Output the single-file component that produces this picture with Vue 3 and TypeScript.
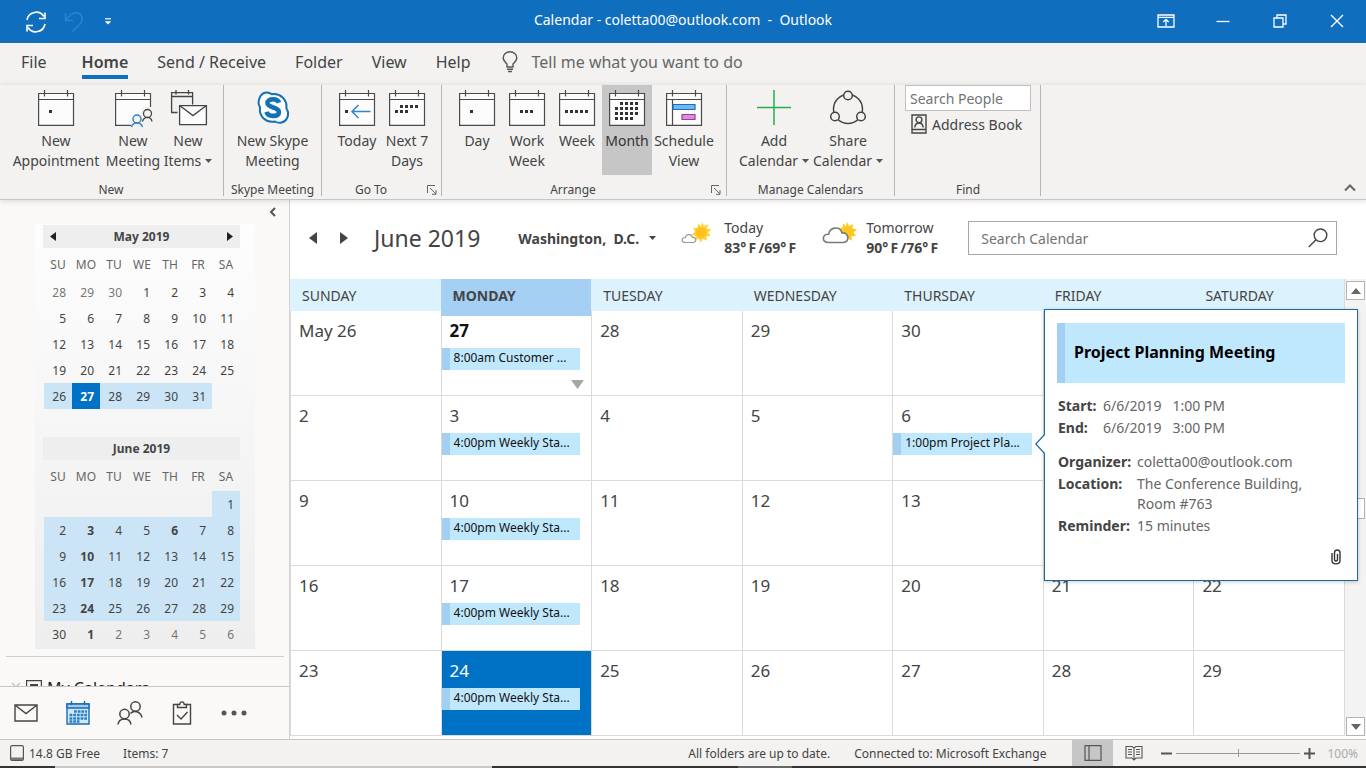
<script setup lang="ts">
import { ref } from 'vue'

interface RibbonButton {
  id: string
  lines: string[]
  icon: 'cal' | 'items' | 'skype' | 'plus' | 'share'
  dots?: number[][]
  menu?: boolean
}
interface RibbonGroup {
  id: string
  label: string
  launcher?: boolean
  buttons: RibbonButton[]
}

const monthDots: number[][] = [
  [13, 14], [18, 14], [23, 14], [28, 14],
  [8, 19], [13, 19], [18, 19], [23, 19], [28, 19],
  [8, 24], [13, 24], [18, 24], [23, 24], [28, 24],
  [8, 29], [13, 29], [18, 29], [23, 29],
]

const groups: RibbonGroup[] = [
  {
    id: 'new', label: 'New',
    buttons: [
      { id: 'appointment', lines: ['New', 'Appointment'], icon: 'cal', dots: [[13, 22]] },
      { id: 'meeting', lines: ['New', 'Meeting'], icon: 'cal', dots: [] },
      { id: 'items', lines: ['New', 'Items'], icon: 'items', menu: true },
    ],
  },
  {
    id: 'skype', label: 'Skype Meeting',
    buttons: [{ id: 'skype', lines: ['New Skype', 'Meeting'], icon: 'skype' }],
  },
  {
    id: 'goto', label: 'Go To', launcher: true,
    buttons: [
      { id: 'today', lines: ['Today'], icon: 'cal', dots: [[8, 22]] },
      { id: 'next7', lines: ['Next 7', 'Days'], icon: 'cal', dots: [[13, 17], [18, 17], [23, 17], [28, 17], [8, 22], [13, 22], [18, 22]] },
    ],
  },
  {
    id: 'arrange', label: 'Arrange', launcher: true,
    buttons: [
      { id: 'day', lines: ['Day'], icon: 'cal', dots: [[13, 22]] },
      { id: 'work', lines: ['Work', 'Week'], icon: 'cal', dots: [[13, 22], [18, 22], [23, 22]] },
      { id: 'week', lines: ['Week'], icon: 'cal', dots: [[8, 22], [13, 22], [18, 22], [23, 22], [28, 22]] },
      { id: 'month', lines: ['Month'], icon: 'cal', dots: monthDots },
      { id: 'schedule', lines: ['Schedule', 'View'], icon: 'cal', dots: [] },
    ],
  },
  {
    id: 'manage', label: 'Manage Calendars',
    buttons: [
      { id: 'add', lines: ['Add', 'Calendar'], icon: 'plus', menu: true },
      { id: 'share', lines: ['Share', 'Calendar'], icon: 'share', menu: true },
    ],
  },
]

const tabs = ['File', 'Home', 'Send / Receive', 'Folder', 'View', 'Help']
const dow = ['SU', 'MO', 'TU', 'WE', 'TH', 'FR', 'SA']

interface MiniDay { n: string; cls: string }
const d = (list: string, cls = ''): MiniDay[] => list.split(' ').map((n) => ({ n: n === '-' ? '' : n, cls: n === '-' ? '' : cls }))
const juneWeek = (list: string, bold: string[]): MiniDay[] =>
  list.split(' ').map((n) => ({ n, cls: bold.includes(n) ? 'in busy' : 'in' }))

const minis = [
  {
    title: 'May 2019', nav: true,
    weeks: [
      [...d('28 29 30', 'off'), ...d('1 2 3 4')],
      d('5 6 7 8 9 10 11'),
      d('12 13 14 15 16 17 18'),
      d('19 20 21 22 23 24 25'),
      [...d('26', 'in'), ...d('27', 'today'), ...d('28 29 30 31', 'in'), ...d('-')],
    ],
  },
  {
    title: 'June 2019', nav: false,
    weeks: [
      [...d('- - - - - -'), ...d('1', 'in')],
      juneWeek('2 3 4 5 6 7 8', ['3', '6']),
      juneWeek('9 10 11 12 13 14 15', ['10']),
      juneWeek('16 17 18 19 20 21 22', ['17']),
      juneWeek('23 24 25 26 27 28 29', ['24']),
      [...d('30'), ...d('1', 'busy'), ...d('2 3 4 5 6', 'off')],
    ],
  },
]

const weekdays = ['SUNDAY', 'MONDAY', 'TUESDAY', 'WEDNESDAY', 'THURSDAY', 'FRIDAY', 'SATURDAY']
interface DayCell { label: string; event?: string; cls?: string; more?: boolean }
const weekly = '4:00pm Weekly Sta...'
const blank: DayCell = { label: '' }
const weeks: DayCell[][] = [
  [{ label: 'May 26' }, { label: '27', event: '8:00am Customer ...', cls: 'now', more: true }, { label: '28' }, { label: '29' }, { label: '30' }, blank, blank],
  [{ label: '2' }, { label: '3', event: weekly }, { label: '4' }, { label: '5' }, { label: '6', event: '1:00pm Project Pla...' }, blank, blank],
  [{ label: '9' }, { label: '10', event: weekly }, { label: '11' }, { label: '12' }, { label: '13' }, blank, blank],
  [{ label: '16' }, { label: '17', event: weekly }, { label: '18' }, { label: '19' }, { label: '20' }, { label: '21' }, { label: '22' }],
  [{ label: '23' }, { label: '24', event: weekly, cls: 'picked' }, { label: '25' }, { label: '26' }, { label: '27' }, { label: '28' }, { label: '29' }],
]

const people = ref('')
const query = ref('')
const zoomLevel = ref(50)
</script>

<template>
  <div class="window">
    <header class="titlebar">
      <div class="quick">
        <button type="button" aria-label="Send and receive all">
          <svg width="24" height="24" viewBox="0 0 24 24" fill="none" stroke="#fff" stroke-width="1.6">
            <path d="M3 10a9.3 9.3 0 0 1 17-3.500M21 14a9.300 9.300 0 0 1-17 3.500" />
            <path d="M21 2.500v6h-6M3 21.500v-6h6" />
          </svg>
        </button>
        <button type="button" aria-label="Undo" disabled>
          <svg width="20" height="22" viewBox="0 0 20 22" fill="none" stroke="#2b84d2" stroke-width="1.600">
            <path d="M1.500 2v7.500H9M2 9l4.500-5C10 .5 15 1 17.200 4.500c1.800 3 1 6-1 8.300L8.500 20.500" />
          </svg>
        </button>
        <button type="button" aria-label="Customize Quick Access Toolbar">
          <svg width="8" height="8" viewBox="0 0 8 8"><path d="M1 .8h6" stroke="#fff" stroke-width="1.200" /><path d="M.8 3.200h6.400L4 6.600z" fill="#fff" /></svg>
        </button>
      </div>
      <h1>Calendar - coletta00@outlook.com &nbsp;-&nbsp; Outlook</h1>
      <div class="controls">
        <button type="button" aria-label="Ribbon display options">
          <svg width="18" height="14" viewBox="0 0 18 14" fill="none" stroke="#fff" stroke-width="1.300"><path d="M1 1h16v12H1zM1 3.300h16M9 12V5.500M6.300 8 9 5.300 11.700 8" /></svg>
        </button>
        <button type="button" aria-label="Minimize">
          <svg width="14" height="14" viewBox="0 0 14 14" stroke="#fff" stroke-width="1.300"><path d="M.5 7.500h13" /></svg>
        </button>
        <button type="button" aria-label="Restore">
          <svg width="14" height="14" viewBox="0 0 14 14" fill="none" stroke="#fff" stroke-width="1.300"><path d="M1 4h9v9H1zM4 4V1h9v9h-3" /></svg>
        </button>
        <button type="button" aria-label="Close">
          <svg width="14" height="14" viewBox="0 0 14 14" stroke="#fff" stroke-width="1.400"><path d="m1 1 12 12M13 1 1 13" /></svg>
        </button>
      </div>
    </header>

    <nav class="tabs" aria-label="Ribbon tabs">
      <button v-for="t in tabs" :key="t" type="button" :class="{ active: t === 'Home', file: t === 'File' }">{{ t }}</button>
      <button type="button" class="tell">
        <svg width="16" height="22" viewBox="0 0 16 22" fill="none" stroke="#555" stroke-width="1.400">
          <path d="M5 16v-3C3 11 1.200 9.500 1.200 7a6.800 6.300 0 0 1 13.600 0c0 2.500-1.800 4-3.800 6v3zM5 18.200h6M6 20.500h4" />
        </svg>
        <span>Tell me what you want to do</span>
      </button>
    </nav>

    <section class="ribbon" aria-label="Home">
      <div v-for="g in groups" :key="g.id" class="group" :class="g.id">
        <div class="buttons">
          <button v-for="b in g.buttons" :key="b.id" type="button" :class="{ on: b.id === 'month' }">
            <svg v-if="b.icon === 'cal'" width="38" height="36" viewBox="-1 0 38 36" fill="none" stroke="#4a4a4a" stroke-width="1.200">
              <path d="M.6 3.500h34.900v31.900H.6z" fill="#fcfcfc" />
              <path d="M.6 9.500h34.900M6.500 0v6.500M29.500 0v6.500" />
              <path v-for="(p, i) in b.dots" :key="i" :d="`M${p[0] - 2} ${p[1] - 0.5}h3`" stroke="#333" stroke-width="3" />
              <template v-if="b.id === 'meeting'">
                <path d="M16 37V30l10-6 2-7h9v20z" fill="#f3f2f1" stroke="none" />
                <g stroke="#444" stroke-width="1.300"><circle cx="32.500" cy="23.500" r="4" /><path d="M27.500 31.500c1.500-5.500 8.500-5.500 9.500 0" /></g>
                <g stroke="#2b7cc2" stroke-width="1.400"><circle cx="22" cy="29" r="4" /><path d="M16.500 37c1.500-5.500 9.500-5.500 11 0" /></g>
              </template>
              <path v-if="b.id === 'today'" d="M31.500 21.500H13M19.500 15l-6.500 6.500 6.500 6.500" stroke="#2f86cc" stroke-width="1.500" />
              <template v-if="b.id === 'schedule'">
                <path d="M6.500 10v25" />
                <path d="M7 14.500h22v5H7z" fill="#6fb9ef" stroke="#1a6fb8" />
                <path d="M16 24.500h13v5H16z" fill="#e08ade" stroke="#9a3f98" />
              </template>
            </svg>
            <svg v-else-if="b.icon === 'items'" width="38" height="36" viewBox="0 0 38 36" fill="none" stroke="#444" stroke-width="1.300">
              <path d="M8.500 22.500H2.600V2.600h21v12" /><path d="M2.600 6.500h21M7 0v4.500M19.500 0v4.500" />
              <path d="M10.600 15.600h26.800v19H10.600z" fill="#fcfcfc" /><path d="m10.600 15.600 13.400 10 13.400-10" />
            </svg>
            <svg v-else-if="b.icon === 'skype'" width="36" height="36" viewBox="0 0 36 36">
              <path d="M10 2.800c2.600-.6 5 .2 6.800 1.500C25 3 32.600 9.500 31.400 18.500c2 3 2.300 6.500.6 9.700-2.500 4.700-8 5.800-12 3.300C11 33 3.800 26.500 5 17.300c-1.600-2.800-1.900-6-.6-9C5.400 5.500 7.400 3.500 10 2.800z" fill="#fdfdfd" stroke="#1272b4" stroke-width="2" />
              <path d="M24 12.700c-.9-2.700-3.400-3.400-6-3.400-3.400 0-5.500 1.500-5.500 3.800 0 5.400 11.400 3.300 11.400 8.800 0 2.700-2.500 4-6 4-3 0-5.600-1.100-6.400-4" fill="none" stroke="#1272b4" stroke-width="4.600" />
            </svg>
            <svg v-else-if="b.icon === 'plus'" width="36" height="36" viewBox="0 0 36 36" stroke="#27ae4b" stroke-width="1.500"><path d="M18 0v35M1 17.500h34" /></svg>
            <svg v-else width="38" height="36" viewBox="0 0 38 36" fill="#f3f2f1" stroke="#444" stroke-width="1.500">
              <circle cx="19" cy="19" r="14.500" fill="none" /><circle cx="19" cy="5.500" r="4.300" /><circle cx="6" cy="26.500" r="4.300" /><circle cx="32" cy="26.500" r="4.300" />
            </svg>
            <span v-for="(l, i) in b.lines" :key="l" class="line">{{ l }}<svg v-if="b.menu && i === 1" class="caret" width="7" height="4" viewBox="0 0 7 4"><path d="M0 0h7L3.500 4z" fill="#555" /></svg></span>
          </button>
        </div>
        <div class="glabel" :class="{ withlauncher: g.launcher }">
          {{ g.label }}
          <button v-if="g.launcher" type="button" class="launcher" :aria-label="g.label + ' options'">
            <svg width="10" height="10" viewBox="0 0 10 10" fill="none" stroke="#666"><path d="M.5 8V.5H8M3 3l6 6M9 5v4.300H5" /></svg>
          </button>
        </div>
      </div>
      <div class="group find">
        <div class="findbody">
          <input v-model="people" type="text" placeholder="Search People" aria-label="Search People">
          <button type="button" class="book">
            <svg width="16" height="20" viewBox="0 0 16 20" fill="none" stroke="#444" stroke-width="1.400"><path d="M1 1h14v18H1zM1 15.500h14" /><circle cx="8" cy="5.800" r="2.900" /><path d="M3.800 13.500c.5-6 7.900-6 8.400 0" /></svg>
            Address Book
          </button>
        </div>
        <div class="glabel">Find</div>
      </div>
      <button type="button" class="collapse" aria-label="Collapse the ribbon">
        <svg width="12" height="8" viewBox="0 0 12 8" fill="none" stroke="#666" stroke-width="2"><path d="m1 6.500 5-5 5 5" /></svg>
      </button>
    </section>

    <div class="body">
      <aside class="side">
        <div class="folders">
          <button type="button" class="shrink" aria-label="Minimize the folder pane">
            <svg width="7" height="10" viewBox="0 0 7 10" fill="none" stroke="#555" stroke-width="2"><path d="M6 1 2 5l4 4" /></svg>
          </button>
          <div class="minis">
            <div v-for="m in minis" :key="m.title" class="mini">
              <div class="minihead">
                <button v-if="m.nav" type="button" aria-label="Previous month"><svg width="6" height="9" viewBox="0 0 6 9"><path d="M6 0v9L0 4.500z" fill="#222" /></svg></button>
                <h2>{{ m.title }}</h2>
                <button v-if="m.nav" type="button" aria-label="Next month"><svg width="6" height="9" viewBox="0 0 6 9"><path d="M0 0v9l6-4.500z" fill="#222" /></svg></button>
              </div>
              <table :aria-label="m.title">
                <thead><tr><th v-for="x in dow" :key="x" scope="col">{{ x }}</th></tr></thead>
                <tbody>
                  <tr v-for="(w, i) in m.weeks" :key="i"><td v-for="(c, j) in w" :key="j" :class="c.cls">{{ c.n }}</td></tr>
                </tbody>
              </table>
            </div>
          </div>
          <div class="mine">
            <svg width="34" height="18" viewBox="0 0 34 18" fill="none" stroke="#444" stroke-width="1.200"><path d="m4 6 4 4 4-4" stroke="#bbb" /><path d="M18.600 3.600h14.800v13H18.600z" /><path d="M22 7h8v6h-8z" fill="#444" stroke="none" /></svg>
            <span>My Calendars</span>
          </div>
        </div>
        <nav class="modules" aria-label="Modules">
          <button type="button" aria-label="Mail">
            <svg width="24" height="18" viewBox="0 0 24 18" fill="none" stroke="#444" stroke-width="1.400"><path d="M1 1h22v16H1zM1 1l11 8.500L23 1" /></svg>
          </button>
          <button type="button" aria-label="Calendar">
            <svg width="24" height="24" viewBox="0 0 24 24" fill="none" stroke="#1b6ab0" stroke-width="1.400">
              <path d="M1 3h22v20H1z" fill="#cfe8fb" /><path d="M1 3h22v4H1z" fill="#9fcdf2" /><path d="M5.500 0v4M18.500 0v4" />
              <path d="M8 10.500h13M3.500 14h17.500M3.500 17.500h17.500M3.500 20.500h10" stroke="#2f7fc4" stroke-width="2.600" stroke-dasharray="2.800 .9" />
            </svg>
          </button>
          <button type="button" aria-label="People">
            <svg width="26" height="24" viewBox="0 0 26 24" fill="none" stroke="#444" stroke-width="1.500"><circle cx="18.500" cy="5.500" r="4.700" /><path d="M13.500 12.500c3-3.500 10-2.500 11.500 4" /><circle cx="7.500" cy="13" r="4.700" /><path d="M1 23.500c1-7.500 12-7.500 13 0" /></svg>
          </button>
          <button type="button" aria-label="Tasks">
            <svg width="20" height="24" viewBox="0 0 20 24" fill="none" stroke="#444" stroke-width="1.400"><path d="M6 3.500H1.500V23h17V3.500H14" /><path d="M5.500 6.500v-3h2.300c.3-3.500 4.100-3.500 4.400 0h2.300v3z" /><path d="m5 14 4 4 6.500-7" /></svg>
          </button>
          <button type="button" aria-label="More">
            <svg width="26" height="6" viewBox="0 0 26 6" fill="#555"><circle cx="3" cy="3" r="2.500" /><circle cx="13" cy="3" r="2.500" /><circle cx="23" cy="3" r="2.500" /></svg>
          </button>
        </nav>
      </aside>

      <main class="main">
        <div class="bar">
          <button type="button" aria-label="Back"><svg width="9" height="12" viewBox="0 0 9 12"><path d="M8 0v12L0 6z" fill="#444" /></svg></button>
          <button type="button" class="fwd" aria-label="Forward"><svg width="9" height="12" viewBox="0 0 9 12"><path d="M1 0v12l8-6z" fill="#444" /></svg></button>
          <h2>June 2019</h2>
          <button type="button" class="place">Washington,&nbsp; D.C.<svg width="7" height="4" viewBox="0 0 7 4"><path d="M0 0h7L3.500 4z" fill="#444" /></svg></button>
          <div class="weather">
            <svg width="36" height="24" viewBox="0 0 36 24">
              <path d="m22 0 2 4 4-2-1 4.500 4.500 1L28 10.500l3 3.500-4.500.3.300 4.500-4-2-2 4-2-4-4.300 1.400 1.200-4.300-4.200-1.200 3.700-3-2-4 4.300.3.500-4.500 3 3z" fill="#ffd23a" /><circle cx="21" cy="10.500" r="5.500" fill="#ffc21a" />
              <path d="M5.500 20.500c-4.500 0-4.500-5 0-5 .5-3.800 6-4 7 0 4-.5 4.500 5 .5 5z" fill="#fff" stroke="#999" stroke-width="1.200" />
            </svg>
            <div><span>Today</span><b>83°&#8201;F&#8201;/69°&#8201;F</b></div>
          </div>
          <div class="weather">
            <svg width="36" height="24" viewBox="0 0 36 24">
              <path d="m25 0 2 4 4-2-.5 4.500 4.500 1-3.500 3 2.500 3.500-4.500.3.300 4.500-4-2-2 4-2-4-4.300 1.400 1.200-4.300-4.200-1.200 3.700-3-2-4 4.300.3.500-4.500 3 3z" fill="#ffc81a" />
              <path d="M6 20.500c-6.500 0-6-8.500.5-8.200C8 4.500 18 4 20 11c7-1.500 8 9.500 1.500 9.500z" fill="#fff" stroke="#7a7a7a" stroke-width="1.600" />
            </svg>
            <div><span>Tomorrow</span><b>90°&#8201;F&#8201;/76°&#8201;F</b></div>
          </div>
          <div class="search">
            <input v-model="query" type="text" placeholder="Search Calendar" aria-label="Search Calendar">
            <button type="button" aria-label="Search"><svg width="20" height="20" viewBox="0 0 20 20" fill="none" stroke="#444" stroke-width="1.400"><circle cx="12.500" cy="7.300" r="6.300" /><path d="M8 11.800.8 19" /></svg></button>
          </div>
        </div>

        <div class="month">
          <table class="grid" aria-label="June 2019">
            <thead><tr><th v-for="w in weekdays" :key="w" scope="col" :class="{ cur: w === 'MONDAY' }">{{ w }}</th></tr></thead>
            <tbody>
              <tr v-for="(w, i) in weeks" :key="i">
                <td v-for="(c, j) in w" :key="j" :class="c.cls">
                  <span v-if="c.label" class="num">{{ c.label }}</span>
                  <button v-if="c.event" type="button" class="event">{{ c.event }}</button>
                  <svg v-if="c.more" class="more" width="13" height="9" viewBox="0 0 13 9"><path d="M0 0h13L6.500 9z" fill="#a6a6a6" /></svg>
                </td>
              </tr>
            </tbody>
          </table>
          <div class="scroll">
            <button type="button" aria-label="Scroll up"><svg width="10" height="6" viewBox="0 0 10 6"><path d="M0 6h10L5 0z" fill="#666" /></svg></button>
            <span class="thumb"></span>
            <button type="button" aria-label="Scroll down"><svg width="10" height="6" viewBox="0 0 10 6"><path d="M0 0h10L5 6z" fill="#666" /></svg></button>
          </div>

          <article class="card">
            <svg class="tip" width="10" height="20" viewBox="0 0 10 20"><path d="M10 0 .8 10 10 20" fill="#fff" stroke="#1b6a9c" stroke-width="1.200" /></svg>
            <h3>Project Planning Meeting</h3>
            <dl class="when">
              <dt>Start:</dt><dd>6/6/2019 &nbsp; 1:00 PM</dd>
              <dt>End:</dt><dd>6/6/2019 &nbsp; 3:00 PM</dd>
            </dl>
            <dl class="info">
              <dt>Organizer:</dt><dd>coletta00@outlook.com</dd>
              <dt>Location:</dt><dd class="two">The Conference Building, Room #763</dd>
              <dt>Reminder:</dt><dd>15 minutes</dd>
            </dl>
            <svg class="clip" width="10" height="16" viewBox="0 0 10 16" fill="none" stroke="#333" stroke-width="1.400"><path d="M1 4v7.500c0 4.500 8 4.500 8 0V4c0-4-5.500-4-5.500 0v6.500c0 2 3 2 3 0V5" /></svg>
          </article>
        </div>
      </main>
    </div>

    <footer class="status">
      <svg width="14" height="16" viewBox="0 0 14 16" fill="none" stroke="#555" stroke-width="1.200"><rect x=".6" y=".6" width="12.800" height="14.800" rx="1.500" /><path d="M1 12.500h12v2.500H1z" fill="#777" stroke="none" /></svg>
      <span>14.8 GB Free</span>
      <span class="items">Items: 7</span>
      <span class="sync">All folders are up to date.</span>
      <span class="conn">Connected to: Microsoft Exchange</span>
      <button type="button" class="view sel" aria-label="Normal view"><svg width="18" height="16" viewBox="0 0 18 16" fill="none" stroke="#555" stroke-width="1.200"><path d="M1 .6h16v14.800H1zM5 .6v14.800" /></svg></button>
      <button type="button" class="view" aria-label="Reading view"><svg width="18" height="16" viewBox="0 0 18 16" fill="none" stroke="#555" stroke-width="1.100"><path d="M9 2v12M1 1.500h6L9 3l2-1.500h6V13h-6l-2 2-2-2H1zM3 4.500h4M3 7h4M3 9.500h4M11 4.500h4M11 7h4M11 9.500h4" /></svg></button>
      <button type="button" class="z" aria-label="Zoom out"><svg width="11" height="11" viewBox="0 0 11 11" stroke="#555" stroke-width="2"><path d="M0 5.500h11" /></svg></button>
      <input v-model="zoomLevel" type="range" min="0" max="100" aria-label="Zoom">
      <button type="button" class="z" aria-label="Zoom in"><svg width="11" height="11" viewBox="0 0 11 11" stroke="#555" stroke-width="2"><path d="M0 5.500h11M5.500 0v11" /></svg></button>
      <span class="pct">100%</span>
    </footer>
    <div class="edge"></div>
  </div>
</template>

<style>
body { margin: 0; overflow: hidden; }
</style>

<style scoped>
* { box-sizing: border-box; }
.window { display: flex; flex-direction: column; height: 100vh; font-family: "Noto Sans", "Open Sans", sans-serif; font-size: 14px; color: #444; background: #faf9f8; }
button { display: flex; align-items: center; justify-content: center; padding: 0; border: 0; background: none; font: inherit; color: inherit; }
svg { display: block; flex: none; }
h1, h2, h3, dl, dd { margin: 0; }
input { font: inherit; color: #444; border-radius: 0; }
input::placeholder { color: #737373; opacity: 1; }

.titlebar { display: grid; grid-template-columns: 1fr auto 1fr; height: 43px; flex: none; background: #106ebe; color: #fff; }
.titlebar h1 { font-size: 14px; font-weight: 400; line-height: 40px; }
.quick { display: flex; align-items: center; padding-left: 24px; gap: 16px; }
.quick button:last-child { margin-left: 4px; }
.controls { display: flex; justify-content: flex-end; padding-right: 1px; }
.controls button { width: 57px; height: 42px; }

.tabs { display: flex; height: 42px; flex: none; padding: 0 21px; gap: 29px; background: #f3f2f1; font-size: 16px; }
.tabs button { height: 38px; white-space: nowrap; border-bottom: 4px solid transparent; padding-top: 4px; }
.tabs .file { margin-right: 6px; }
.tabs .active { font-weight: 600; border-color: #106ebe; height: 36px; padding-top: 6px; }
.tabs .tell { gap: 14px; margin-left: 2px; color: #666; }

.ribbon { position: relative; z-index: 2; display: flex; height: 115px; flex: none; background: #f3f2f1; border-bottom: 1px solid #c8c6c4; box-shadow: 0 1px 6px rgba(0, 0, 0, .14); }
.group { display: flex; flex-direction: column; justify-content: space-between; height: 111px; padding: 0 10px; border-right: 1px solid #b8b6b4; }
.buttons { display: grid; grid-auto-flow: column; grid-auto-columns: 50px; height: 90px; }
.buttons button { flex-direction: column; justify-content: flex-start; padding-top: 5px; white-space: nowrap; }
.buttons button > svg { margin-bottom: 5px; overflow: visible; }
.buttons .on { background: #c6c6c6; color: #333; }
.line { display: flex; align-items: center; line-height: 20px; }
.caret { margin-left: 4px; }
.new { padding: 0 9px 0 8px; }
.new .buttons { grid-template-columns: 96px 58px 52px; }
.skype { padding: 0; }
.skype .buttons { grid-template-columns: 97px; }
.goto { padding-right: 9px; }
.arrange .buttons { grid-template-columns: repeat(4, 50px) 64px; }
.manage .buttons { grid-template-columns: 74px 74px; width: 157px; }
.manage { padding-right: 0; }
.manage .glabel { padding-right: 10px; }
.find { padding-right: 9px; }
.glabel { position: relative; height: 12px; line-height: 12px; font-size: 12px; text-align: center; white-space: nowrap; }
.withlauncher { padding-right: 22px; }
.launcher { position: absolute; right: -5px; bottom: 1px; }
.findbody { display: flex; flex-direction: column; align-items: flex-start; width: 126px; }
.findbody input { width: 100%; height: 26px; padding: 0 4px; border: 1px solid #c0c0c0; background: #fff; }
.book { gap: 5px; padding-left: 6px; height: 26px; white-space: nowrap; }
.collapse { margin-left: auto; align-self: flex-end; padding: 0 10px 7px 0; }

.body { display: flex; flex: 1; min-height: 0; }
.side { display: flex; flex-direction: column; flex: none; width: 290px; border-right: 1px solid #d4d2d0; background: #faf9f8; }
.folders { display: flex; flex-direction: column; flex: 1; min-height: 0; overflow: hidden; }
.shrink { align-self: flex-end; height: 24px; margin-right: 13px; flex: none; }
.minis { display: flex; flex-direction: column; flex: none; gap: 28px; width: 220px; margin-left: 35px; padding: 1px 15px 2px 8px; background: linear-gradient(#fdfdfd, #efeeee); }
.minihead { display: flex; align-items: center; justify-content: space-between; height: 23px; padding: 0 7px; background: #eee; }
.minihead h2 { flex: 1; text-align: center; font-size: 12px; font-weight: 700; }
.mini table { width: 196px; margin-left: 1px; border-collapse: collapse; table-layout: fixed; font-size: 12px; }
.mini th { height: 31px; padding: 2px 0 0; font-weight: 400; color: #666; }
.mini td { height: 26px; padding: 0 6px 0 0; text-align: right; }
.mini .off { color: #777; }
.mini .in { background: #cce5f6; }
.mini .today { background: #0072c6; color: #fff; font-weight: 700; }
.mini .busy { font-weight: 700; }
.mine { display: flex; align-items: flex-start; gap: 5px; flex: none; margin: 7px 5px 0 6px; padding: 20px 0 0 2px; border-top: 1px solid #d0cecc; font-size: 16px; line-height: 22px; color: #222; }
.modules { display: flex; align-items: center; flex: none; height: 53px; padding-left: 0; border-top: 1px solid #c8c6c4; }
.modules button { width: 52px; height: 100%; }

.main { display: flex; flex-direction: column; flex: 1; min-width: 0; background: #fff; }
.bar { display: flex; align-items: center; flex: none; height: 79px; padding: 0 29px 3px 19px; }
.bar .fwd { margin-left: 21px; }
.bar h2 { margin-left: 26px; font-size: 23px; font-weight: 400; white-space: nowrap; }
.place { margin-left: 38px; gap: 10px; font-weight: 700; white-space: nowrap; }
.weather { display: flex; align-items: center; gap: 8px; margin-left: 24px; line-height: 20px; }
.weather + .weather { margin-left: 18px; }
.weather svg { margin-bottom: 8px; }
.weather div { min-width: 80px; }
.weather span, .weather b { display: block; white-space: nowrap; }
.search { display: flex; align-items: center; flex: 1; min-width: 120px; height: 34px; margin-left: 22px; padding-right: 8px; border: 1px solid #a6a6a6; }
.search input { flex: 1; min-width: 0; height: 30px; padding: 0 12px; border: 0; outline: 0; }

.month { position: relative; display: flex; flex: 1; min-height: 0; padding-bottom: 3px; }
.grid { flex: 1; width: 100%; height: 100%; table-layout: fixed; border-collapse: separate; border-spacing: 0; border-right: 1px solid #dadada; }
.grid th { height: 32px; padding: 0 12px; text-align: left; font-weight: 400; background: #dcf2fd; }
.grid .cur { position: relative; z-index: 1; font-weight: 700; background: #a6d0f3; box-shadow: 0 5px 0 #a6d0f3; }
.grid td { position: relative; height: 85px; padding: 9px 0 0; vertical-align: top; border-left: 1px solid #dadada; border-bottom: 1px solid #dadada; }
.num { display: block; padding-left: 8px; font-size: 17px; line-height: 22px; }
.now .num { font-weight: 700; color: #111; }
.grid .picked { background: #0072c6; color: #fff; }
.event { display: block; width: calc(100% - 11px); height: 22px; margin-top: 6px; padding: 0 0 2px 4px; border-left: 8px solid #a3cff2; background: #c0e8fd; color: #111; font-size: 12px; line-height: 20px; text-align: left; white-space: nowrap; overflow: hidden; }
.more { position: absolute; right: 7px; bottom: 6px; }
.scroll { display: flex; flex-direction: column; align-items: center; flex: none; width: 21px; padding-top: 2px; background: #f3f3f3; }
.scroll button { width: 19px; height: 19px; border: 1px solid #b4b4b4; background: #fff; }
.thumb { width: 19px; height: 21px; margin: auto; border: 1px solid #b4b4b4; background: #fff; }

.card { position: absolute; z-index: 3; top: 30px; right: 8px; width: 314px; padding: 13px 12px 15px; border: 1px solid #1b6a9c; background: #fff; box-shadow: 0 1px 4px rgba(0, 0, 0, .2); }
.tip { position: absolute; left: -10px; top: 124px; }
.card h3 { height: 60px; padding-left: 9px; border-left: 8px solid #a3cff2; background: #c0e8fd; color: #000; font-size: 16px; line-height: 58px; }
.card dl { display: grid; padding-left: 1px; line-height: 22px; }
.when { grid-template-columns: 45px 1fr; margin-top: 12px; }
.info { grid-template-columns: 79px 1fr; margin-top: 12px; }
.card dt { font-weight: 700; }
.card dd { color: #666; }
.card .two { line-height: 20px; padding: 1px 30px 1px 0; }
.clip { margin: 12px 4px 0 auto; }

.status { display: flex; align-items: center; flex: none; height: 27px; padding: 0 8px 0 10px; border-top: 1px solid #c8c6c4; background: #f3f2f1; font-size: 12px; white-space: nowrap; }
.status > svg { margin-right: 5px; }
.items { margin-left: 23px; }
.sync { margin-left: auto; }
.conn { margin: 0 26px 0 24px; }
.view { width: 41px; height: 26px; }
.sel { background: #c6c6c6; }
.z { width: 19px; height: 20px; margin-left: 3px; }
input + .z { margin-left: 0; }
.status input { appearance: none; width: 124px; height: 12px; margin: 0; background: linear-gradient(#999, #999) center / 1px 8px no-repeat, linear-gradient(#999, #999) center / 100% 1px no-repeat; }
.status input::-webkit-slider-thumb { appearance: none; width: 6px; height: 10px; background: transparent; }
.pct { margin-left: 8px; color: #aaa; }
.edge { flex: none; height: 2px; background: linear-gradient(90deg, #333 4%, #c8c8c8 4%, #c8c8c8 36%, #333 36%, #333 54%, #666 54%, #666 58%, #333 58%); }
</style>
